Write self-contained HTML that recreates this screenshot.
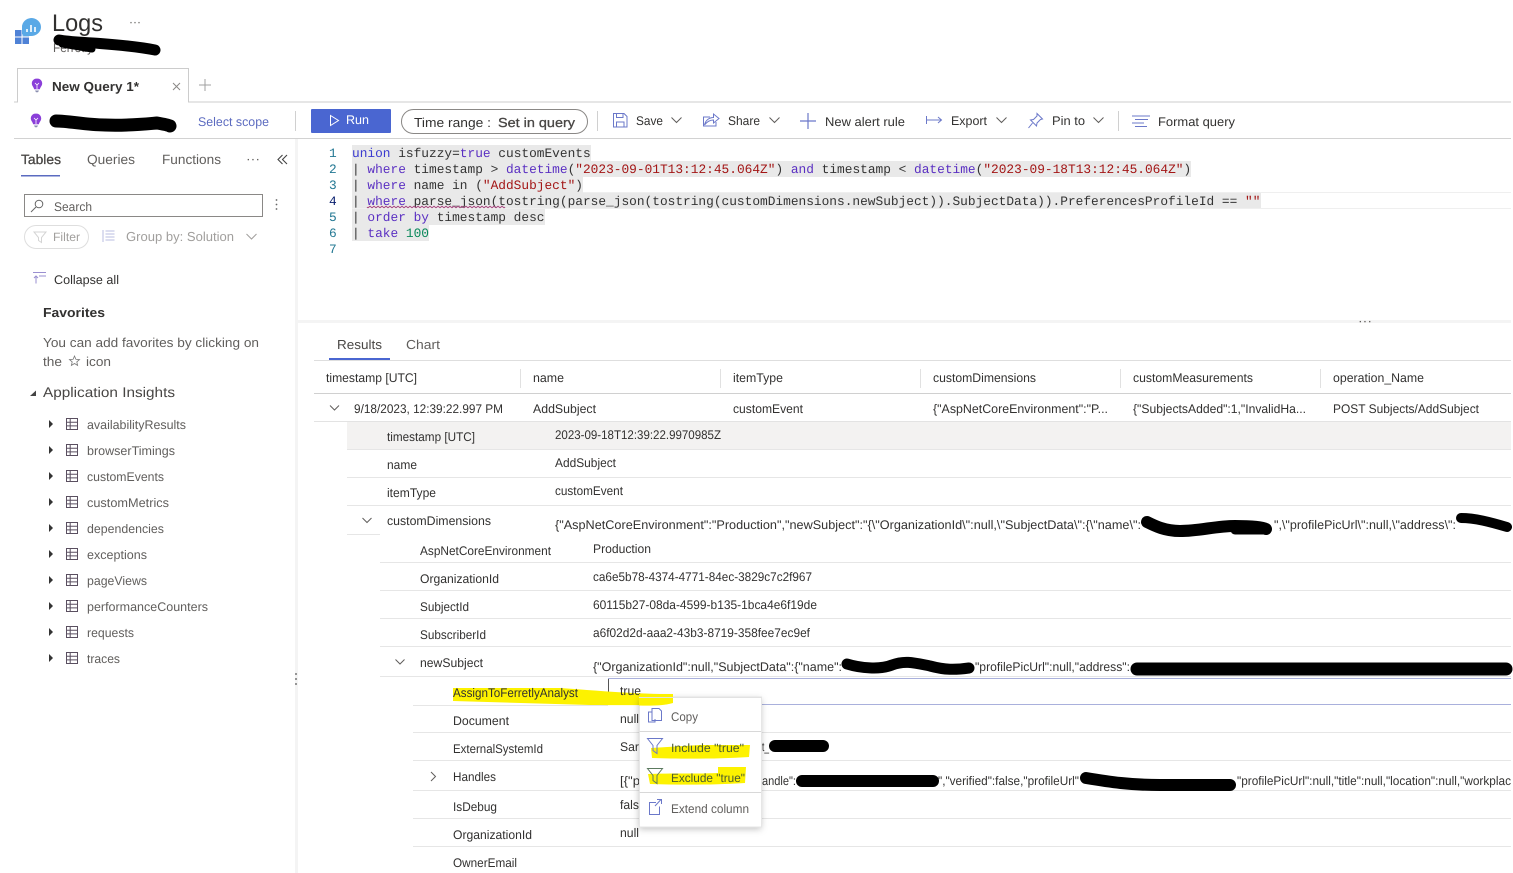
<!DOCTYPE html>
<html lang="en"><head><meta charset="utf-8"><title>Logs</title>
<style>
html,body{margin:0;padding:0;background:#fff;width:1513px;height:873px;overflow:hidden}
svg{display:block;position:absolute;left:0;top:0}
text{font-family:"Liberation Sans",sans-serif;font-size:12.5px;fill:#323130;text-rendering:geometricPrecision;white-space:pre}
.g{fill:#605e5c}.l{fill:#a19f9d}.b{font-weight:bold}
.sb{stroke:#484644;stroke-width:.3px;fill:#484644}
.c{font-family:"Liberation Mono",monospace;font-size:12.83px;fill:#333}
.k{fill:#5a2fc2}.s{fill:#a31515}.n{fill:#09885a}
.hl{fill:#e9e9e9}.ln{stroke:#e6e6e6;stroke-width:1;fill:none}
.ic{stroke:#6b78c9;stroke-width:1;fill:none}
.ch{stroke:#605e5c;stroke-width:1;fill:none}
.r{stroke:#000;fill:none;stroke-linecap:round;stroke-linejoin:round}
.y{fill:#fdf200}
</style></head><body>
<svg width="1513" height="873" viewBox="0 0 1513 873" xmlns="http://www.w3.org/2000/svg">
<!-- logo -->
<g fill="#4f82d6"><rect x="15" y="30" width="6.5" height="6.5"/><rect x="15" y="37.5" width="6.5" height="6.5"/><rect x="22.5" y="37.5" width="6.5" height="6.5"/><rect x="22.5" y="30" width="6.5" height="6.5" fill="#7fb2ea"/></g>
<path d="M31 18a10 9 0 1 1 0 18h-7l-2-2v-7a10 9 0 0 1 9-9z" fill="#5aa9e6"/>
<path d="M27 32v-3M31 32v-7M35 32v-5" stroke="#fff" stroke-width="1.6"/>
<text x="52" y="31" font-size="24" style="font-size:24px" textLength="51" lengthAdjust="spacingAndGlyphs">Logs</text>
<text x="129" y="26" class="g" textLength="12" lengthAdjust="spacingAndGlyphs">···</text>
<text x="53" y="52" class="g" textLength="40" lengthAdjust="spacingAndGlyphs">Ferretly</text>
<path class="r" stroke-width="11" d="M59 40C70 42 82 42 100 43.500C120 45 140 47 155 50"/>
<path class="r" stroke-width="7" d="M62 44L92 49"/>
<!-- tab -->
<path d="M14 102H17.5V68.5H188.5V102H1511" fill="none" stroke="#ccc"/>
<path d="M18 102H188" stroke="#fff" stroke-width="1.5"/>
<path d="M37 78.5c-3.2 0-5.2 2.3-5.2 4.9 0 2.5 1.9 3.6 2.3 5.8h5.8c.4-2.2 2.3-3.3 2.3-5.8 0-2.6-2-4.9-5.2-4.9z" fill="#8b3fd9"/><path d="M35 90.5h4l-1 1.8h-2z" fill="#8b8fb0"/><path d="M35 83l2 2 2-2M37 85v4" stroke="#fff" fill="none" stroke-width=".8"/>
<text x="52" y="91" class="b" style="font-size:13px" textLength="87" lengthAdjust="spacingAndGlyphs">New Query 1*</text>
<path d="M173 83l7 7M180 83l-7 7" stroke="#8a8886" fill="none"/>
<path d="M205 79v12M199 85h12" stroke="#a0a0a0" fill="none"/>
<!-- scope row -->
<path d="M36 113.5c-3.2 0-5.2 2.3-5.2 4.9 0 2.5 1.9 3.6 2.3 5.8h5.8c.4-2.2 2.3-3.3 2.3-5.8 0-2.6-2-4.9-5.2-4.9z" fill="#8b3fd9"/><path d="M34 125.5h4l-1 1.8h-2z" fill="#8b8fb0"/><path d="M34 118l2 2 2-2M36 120v4" stroke="#fff" fill="none" stroke-width=".8"/>
<path class="r" stroke-width="13" d="M56 121C70 121 85 125 105 125C125 126 145 124 157 123C163 124 168 125 170 126"/>
<text x="198" y="126" style="fill:#5c6bc0" textLength="71" lengthAdjust="spacingAndGlyphs">Select scope</text>
<path d="M295.500 111V131M597.500 111V131M1118.500 111V131" stroke="#d0d0d0"/>
<rect x="311" y="109" width="80" height="24" rx="1" fill="#4a66d1"/>
<path d="M330.500 115.500l8 5-8 5z" fill="none" stroke="#fff"/>
<text x="346" y="124" style="fill:#fff" textLength="23" lengthAdjust="spacingAndGlyphs">Run</text>
<rect x="401.500" y="109.500" width="186" height="24" rx="12" fill="#fff" stroke="#8a8886"/>
<text x="414" y="127" style="font-size:13px" textLength="77" lengthAdjust="spacingAndGlyphs">Time range :</text>
<text x="498" y="127" class="sb" style="font-size:13px" textLength="77" lengthAdjust="spacingAndGlyphs">Set in query</text>
<!-- toolbar icons -->
<g class="ic"><path d="M613.500 113.500h10.500l3 3v10.500h-13.500zM616.500 113.500v4h6.500v-4M616.500 127v-5h7.500v5"/></g>
<text x="636" y="125" textLength="27" lengthAdjust="spacingAndGlyphs">Save</text>
<path class="ch" d="M671.500 117.500l5 5 5-5M769.500 117.500l5 5 5-5M996.500 117.500l5 5 5-5M1093.500 117.500l5 5 5-5"/>
<g class="ic"><path d="M710 117h-6.500v9h12.500v-4"/><path d="M704.500 125c1-5 5-7.500 9-7.500v-3.500l5.500 4.500-5.500 4.500v-3c-3 0-6 1-9 5z"/></g>
<text x="728" y="125" textLength="32" lengthAdjust="spacingAndGlyphs">Share</text>
<path class="ic" d="M808 113v16M800 121h16" style="stroke-width:1.2"/>
<text x="825" y="126" textLength="80" lengthAdjust="spacingAndGlyphs">New alert rule</text>
<path class="ic" d="M926.500 116v8M927 120h14M938 117l3.500 3-3.500 3"/>
<text x="951" y="125" textLength="36" lengthAdjust="spacingAndGlyphs">Export</text>
<path class="ic" d="M1037 113.500l5.500 5.500-2 .5-3.500 3.500-.5 3-6-6 3-.5 3.500-3.500zM1032.500 123l-4 5"/>
<text x="1052" y="125" textLength="33" lengthAdjust="spacingAndGlyphs">Pin to</text>
<path class="ic" d="M1132 116h18M1135 119.500h13M1132 123h12M1135 126.500h12"/>
<text x="1158" y="126" textLength="77" lengthAdjust="spacingAndGlyphs">Format query</text>
<path d="M14 138.500H1511" stroke="#d2d2d2"/>
<!-- splitters -->
<rect x="295" y="139" width="3" height="734" fill="#f4f4f4"/>
<rect x="298" y="320" width="1213" height="3" fill="#f4f4f4"/>
<text x="1358" y="325" class="g" textLength="14" lengthAdjust="spacingAndGlyphs">···</text>
<g fill="#777"><circle cx="296" cy="674" r="1"/><circle cx="296" cy="679" r="1"/><circle cx="296" cy="684" r="1"/></g>
<!-- left tabs -->
<text x="21" y="164" class="sb" style="font-size:13.500px" textLength="40" lengthAdjust="spacingAndGlyphs">Tables</text>
<rect x="21" y="175" width="39" height="1.500" fill="#5b6bc0"/>
<text x="87" y="164" style="font-size:13.500px" class="g" textLength="48" lengthAdjust="spacingAndGlyphs">Queries</text>
<text x="162" y="164" style="font-size:13.500px" class="g" textLength="59" lengthAdjust="spacingAndGlyphs">Functions</text>
<text x="246" y="163" class="g" textLength="14" lengthAdjust="spacingAndGlyphs">···</text>
<path d="M282.500 155l-4.500 4.500 4.500 4.500M287 155l-4.500 4.500 4.500 4.500" fill="none" stroke="#444" stroke-width="1.100"/>
<!-- search -->
<rect x="24.500" y="194.500" width="238" height="22" fill="#fff" stroke="#8a8886"/>
<circle cx="39" cy="204" r="3.800" fill="none" stroke="#666"/><path d="M36 207l-5 5" stroke="#666"/>
<text x="54" y="211" class="g" textLength="38" lengthAdjust="spacingAndGlyphs">Search</text>
<g fill="#666"><circle cx="276.500" cy="200" r=".9"/><circle cx="276.500" cy="204.500" r=".9"/><circle cx="276.500" cy="209" r=".9"/></g>
<rect x="24.500" y="225.500" width="64" height="23" rx="11.500" fill="#fff" stroke="#dedede"/>
<path d="M34 232h12l-4.500 5.500v5l-3-2v-3z" fill="none" stroke="#d4d4d4"/>
<text x="53" y="241" class="l" style="font-size:12px" textLength="27" lengthAdjust="spacingAndGlyphs">Filter</text>
<path d="M103 230v12M105.500 231h9M105.500 234h9M105.500 237h9M105.500 240h9" stroke="#b8bde0" fill="none"/>
<text x="126" y="241" class="l" style="font-size:13px" textLength="108" lengthAdjust="spacingAndGlyphs">Group by: Solution</text>
<path d="M246.500 234l5 5 5-5" fill="none" stroke="#a19f9d"/>
<!-- collapse -->
<path d="M33 272.500h13M36 276v7.500M34 278l2-2 2 2M39 276h7" fill="none" stroke="#9a8fd0"/>
<text x="54" y="284" textLength="65" lengthAdjust="spacingAndGlyphs">Collapse all</text>
<text x="43" y="317" class="b" style="font-size:13px" textLength="62" lengthAdjust="spacingAndGlyphs">Favorites</text>
<text x="43" y="347" class="g" style="font-size:13px" textLength="216" lengthAdjust="spacingAndGlyphs">You can add favorites by clicking on</text>
<text x="43" y="366" class="g" style="font-size:13px" textLength="19" lengthAdjust="spacingAndGlyphs">the</text>
<path d="M74.500 356l1.400 3.300 3.600.3-2.700 2.300.8 3.500-3.100-1.900-3.100 1.900.8-3.500-2.700-2.300 3.600-.3z" fill="none" stroke="#777" stroke-width=".8"/>
<text x="86" y="366" class="g" style="font-size:13px" textLength="25" lengthAdjust="spacingAndGlyphs">icon</text>
<path d="M30 396h6v-5.500z" fill="#444"/>
<text x="43" y="397" style="font-size:14px;fill:#484644" textLength="132" lengthAdjust="spacingAndGlyphs">Application Insights</text>
<!-- table list -->
<defs><g id="ti"><path d="M49 -5l4 4-4 4z" fill="#333"/><path d="M66.500 -6.500h11v11h-11zM66.500 -2.800h11M66.500 .9h11M70.200 -6.500v11" fill="none" stroke="#5a4f60"/></g></defs>
<use href="#ti" y="425"/><use href="#ti" y="451"/><use href="#ti" y="477"/><use href="#ti" y="503"/><use href="#ti" y="529"/><use href="#ti" y="555"/><use href="#ti" y="581"/><use href="#ti" y="607"/><use href="#ti" y="633"/><use href="#ti" y="659"/>
<g class="g">
<text class="g" x="87" y="429" textLength="99" lengthAdjust="spacingAndGlyphs">availabilityResults</text>
<text class="g" x="87" y="455" textLength="88" lengthAdjust="spacingAndGlyphs">browserTimings</text>
<text class="g" x="87" y="481" textLength="77" lengthAdjust="spacingAndGlyphs">customEvents</text>
<text class="g" x="87" y="507" textLength="82" lengthAdjust="spacingAndGlyphs">customMetrics</text>
<text class="g" x="87" y="533" textLength="77" lengthAdjust="spacingAndGlyphs">dependencies</text>
<text class="g" x="87" y="559" textLength="60" lengthAdjust="spacingAndGlyphs">exceptions</text>
<text class="g" x="87" y="585" textLength="60" lengthAdjust="spacingAndGlyphs">pageViews</text>
<text class="g" x="87" y="611" textLength="121" lengthAdjust="spacingAndGlyphs">performanceCounters</text>
<text class="g" x="87" y="637" textLength="47" lengthAdjust="spacingAndGlyphs">requests</text>
<text class="g" x="87" y="663" textLength="33" lengthAdjust="spacingAndGlyphs">traces</text>
</g>
<!-- editor -->
<path d="M352 192.500H1511M352 208.500H1511" stroke="#efefef"/>
<rect class="hl" x="352" y="145" width="239" height="16"/>
<rect class="hl" x="352" y="161" width="839" height="16"/>
<rect class="hl" x="352" y="177" width="231" height="16"/>
<rect class="hl" x="352" y="193" width="909" height="15"/>
<rect class="hl" x="352" y="209" width="193" height="16"/>
<rect class="hl" x="352" y="225" width="77" height="16"/>
<g>
<text class="c" x="329" y="157" style="fill:#237893">1</text>
<text class="c" x="329" y="173" style="fill:#237893">2</text>
<text class="c" x="329" y="189" style="fill:#237893">3</text>
<text class="c" x="329" y="205" style="fill:#0b216f">4</text>
<text class="c" x="329" y="221" style="fill:#237893">5</text>
<text class="c" x="329" y="237" style="fill:#237893">6</text>
<text class="c" x="329" y="253" style="fill:#237893">7</text>
<text class="c" x="352" y="157" xml:space="preserve"><tspan class="k" style="fill:#3b3bd0">union</tspan> isfuzzy=<tspan class="k">true</tspan> customEvents</text>
<text class="c" x="352" y="173" xml:space="preserve">| <tspan class="k">where</tspan> timestamp &gt; <tspan class="k">datetime</tspan>(<tspan class="s">"2023-09-01T13:12:45.064Z"</tspan>) <tspan class="k">and</tspan> timestamp &lt; <tspan class="k">datetime</tspan>(<tspan class="s">"2023-09-18T13:12:45.064Z"</tspan>)</text>
<text class="c" x="352" y="189" xml:space="preserve">| <tspan class="k">where</tspan> name in (<tspan class="s">"AddSubject"</tspan>)</text>
<text class="c" x="352" y="205" xml:space="preserve">| <tspan class="k">where</tspan> parse_json(tostring(parse_json(tostring(customDimensions.newSubject)).SubjectData)).PreferencesProfileId == <tspan class="s">""</tspan></text>
<text class="c" x="352" y="221" xml:space="preserve">| <tspan class="k">order by</tspan> timestamp desc</text>
<text class="c" x="352" y="237" xml:space="preserve">| <tspan class="k">take</tspan> <tspan class="n">100</tspan></text>
</g>
<path d="M367 207q1 1.500 2 0t2 0 2 0 2 0 2 0 2 0 2 0 2 0 2 0 2 0 2 0 2 0 2 0 2 0 2 0 2 0 2 0 2 0 2 0 2 0 2 0 2 0 2 0 2 0 2 0 2 0 2 0 2 0 2 0 2 0 2 0 2 0 2 0 2 0 2 0 2 0 2 0 2 0 2 0 2 0 2 0 2 0 2 0 2 0 2 0 2 0 2 0 2 0 2 0 2 0 2 0 2 0 2 0 2 0 2 0 2 0 2 0 2 0 2 0 2 0 2 0 2 0 2 0 2 0 2 0 2 0 2 0 2 0 2 0" fill="none" stroke="#a8457f" stroke-width="1"/>
<!-- results tabs -->
<text x="337" y="349" style="font-size:13px;fill:#484644" textLength="45" lengthAdjust="spacingAndGlyphs">Results</text>
<text x="406" y="349" class="g" style="font-size:13px" textLength="34" lengthAdjust="spacingAndGlyphs">Chart</text>
<rect x="329" y="358" width="61" height="2" fill="#4a66d1"/>
<path d="M314 360.500H1511" stroke="#dedede"/>
<!-- column headers -->
<text x="326" y="382" textLength="91" lengthAdjust="spacingAndGlyphs">timestamp [UTC]</text>
<text x="533" y="382" textLength="31" lengthAdjust="spacingAndGlyphs">name</text>
<text x="733" y="382" textLength="50" lengthAdjust="spacingAndGlyphs">itemType</text>
<text x="933" y="382" textLength="103" lengthAdjust="spacingAndGlyphs">customDimensions</text>
<text x="1133" y="382" textLength="120" lengthAdjust="spacingAndGlyphs">customMeasurements</text>
<text x="1333" y="382" textLength="91" lengthAdjust="spacingAndGlyphs">operation_Name</text>
<path d="M520.500 369v19M720.500 369v19M920.500 369v19M1120.500 369v19M1320.500 369v19" stroke="#e1e1e1"/>
<path d="M314 393.500H1511" stroke="#d0d0d0"/>
<!-- row -->
<path class="ch" d="M330 405.500l4.500 4.500 4.500-4.500"/>
<text x="354" y="413" textLength="149" lengthAdjust="spacingAndGlyphs">9/18/2023, 12:39:22.997 PM</text>
<text x="533" y="413" textLength="63" lengthAdjust="spacingAndGlyphs">AddSubject</text>
<text x="733" y="413" textLength="70" lengthAdjust="spacingAndGlyphs">customEvent</text>
<text x="933" y="413" textLength="175" lengthAdjust="spacingAndGlyphs">{"AspNetCoreEnvironment":"P...</text>
<text x="1133" y="413" textLength="173" lengthAdjust="spacingAndGlyphs">{"SubjectsAdded":1,"InvalidHa...</text>
<text x="1333" y="413" textLength="146" lengthAdjust="spacingAndGlyphs">POST Subjects/AddSubject</text>
<path d="M314 421.500H1511" stroke="#e3e3e3"/>
<!-- details -->
<rect x="347" y="422" width="1164" height="27" fill="#f3f2f1"/>
<path class="ln" d="M347 449.500H1511M347 477.500H1511M347 505.500H1511M347 534.500H380M380 562.500H1511M380 590.500H1511M380 618.500H1511M380 646.500H1511M380 676.500H1511M413 732.500H1511M413 760.500H1511M413 790.500H1511M413 818.500H1511M413 846.500H1511"/>
<path d="M413 705.500H608" class="ln"/>
<text x="387" y="441" textLength="88" lengthAdjust="spacingAndGlyphs">timestamp [UTC]</text>
<text x="555" y="439" textLength="166" lengthAdjust="spacingAndGlyphs">2023-09-18T12:39:22.9970985Z</text>
<text x="387" y="469" textLength="30" lengthAdjust="spacingAndGlyphs">name</text>
<text x="555" y="467" textLength="61" lengthAdjust="spacingAndGlyphs">AddSubject</text>
<text x="387" y="497" textLength="49" lengthAdjust="spacingAndGlyphs">itemType</text>
<text x="555" y="495" textLength="68" lengthAdjust="spacingAndGlyphs">customEvent</text>
<path class="ch" d="M362.500 518l4.500 4.500 4.500-4.500"/>
<text x="387" y="525" textLength="104" lengthAdjust="spacingAndGlyphs">customDimensions</text>
<text x="555" y="529" textLength="586" lengthAdjust="spacingAndGlyphs">{"AspNetCoreEnvironment":"Production","newSubject":"{\"OrganizationId\":null,\"SubjectData\":{\"name\":</text>
<text x="1274" y="529" textLength="182" lengthAdjust="spacingAndGlyphs">",\"profilePicUrl\":null,\"address\":</text>
<path class="r" stroke-width="12" d="M1147 522C1155 526 1165 531 1180 531C1200 531 1215 526 1235 526C1250 526 1262 527 1266 529"/>
<path class="r" stroke-width="9" d="M1235 530L1267 530"/>
<path class="r" stroke-width="10" d="M1461 518C1475 518 1490 522 1507 527"/>
<text x="420" y="555" textLength="131" lengthAdjust="spacingAndGlyphs">AspNetCoreEnvironment</text>
<text x="593" y="553" textLength="58" lengthAdjust="spacingAndGlyphs">Production</text>
<text x="420" y="583" textLength="79" lengthAdjust="spacingAndGlyphs">OrganizationId</text>
<text x="593" y="581" textLength="219" lengthAdjust="spacingAndGlyphs">ca6e5b78-4374-4771-84ec-3829c7c2f967</text>
<text x="420" y="611" textLength="49" lengthAdjust="spacingAndGlyphs">SubjectId</text>
<text x="593" y="609" textLength="224" lengthAdjust="spacingAndGlyphs">60115b27-08da-4599-b135-1bca4e6f19de</text>
<text x="420" y="639" textLength="66" lengthAdjust="spacingAndGlyphs">SubscriberId</text>
<text x="593" y="637" textLength="217" lengthAdjust="spacingAndGlyphs">a6f02d2d-aaa2-43b3-8719-358fee7ec9ef</text>
<path class="ch" d="M395.500 659.500l4.500 4.500 4.500-4.500"/>
<text x="420" y="667" textLength="63" lengthAdjust="spacingAndGlyphs">newSubject</text>
<text x="593" y="671" textLength="249" lengthAdjust="spacingAndGlyphs">{"OrganizationId":null,"SubjectData":{"name":</text>
<text x="975" y="671" textLength="155" lengthAdjust="spacingAndGlyphs">"profilePicUrl":null,"address":</text>
<path class="r" stroke-width="11" d="M847 664C860 668 880 670 892 665C905 660 915 663 930 666C945 670 955 670 969 668"/>
<path class="r" stroke-width="13" d="M1137 669H1506"/>
<!-- selected cell -->
<path d="M608 678.500H1511M608 704.500H1511" stroke="#a9b0dc" stroke-width="1"/>
<path d="M608.500 679V705" stroke="#555"/>
<path class="y" d="M453 688H560C590 690 620 693 660 694C668 695 673 698 673 703C660 706 620 705 590 705L453 701z"/>
<text x="453" y="697" textLength="125" lengthAdjust="spacingAndGlyphs">AssignToFerretlyAnalyst</text>
<text x="620" y="695" textLength="21" lengthAdjust="spacingAndGlyphs">true</text>
<text x="453" y="725" textLength="56" lengthAdjust="spacingAndGlyphs">Document</text>
<text x="620" y="723" textLength="19" lengthAdjust="spacingAndGlyphs">null</text>
<text x="453" y="753" textLength="90" lengthAdjust="spacingAndGlyphs">ExternalSystemId</text>
<text x="620" y="751" textLength="19" lengthAdjust="spacingAndGlyphs">Sar</text>
<text x="762" y="751" textLength="7" lengthAdjust="spacingAndGlyphs">t_</text>
<path class="r" stroke-width="12" d="M775 746H823"/>
<path class="ch" d="M431 772l4.500 4.500-4.500 4.500"/>
<text x="453" y="781" textLength="43" lengthAdjust="spacingAndGlyphs">Handles</text>
<text x="620" y="785" textLength="20" lengthAdjust="spacingAndGlyphs">[{"p</text>
<text x="762" y="785" textLength="34" lengthAdjust="spacingAndGlyphs">andle":</text>
<path class="r" stroke-width="12" d="M802 781H933"/>
<text x="938" y="785" textLength="141" lengthAdjust="spacingAndGlyphs">","verified":false,"profileUrl"</text>
<path class="r" stroke-width="12" d="M1086 778C1110 782 1130 785 1160 785H1230"/>
<text x="1237" y="785" textLength="274" lengthAdjust="spacingAndGlyphs">"profilePicUrl":null,"title":null,"location":null,"workplac</text>
<text x="453" y="811" textLength="44" lengthAdjust="spacingAndGlyphs">IsDebug</text>
<text x="620" y="809" textLength="19" lengthAdjust="spacingAndGlyphs">fals</text>
<text x="453" y="839" textLength="79" lengthAdjust="spacingAndGlyphs">OrganizationId</text>
<text x="620" y="837" textLength="19" lengthAdjust="spacingAndGlyphs">null</text>
<text x="453" y="867" textLength="64" lengthAdjust="spacingAndGlyphs">OwnerEmail</text>
<!-- context menu -->
<defs><filter id="sh" x="-20%" y="-20%" width="140%" height="140%"><feDropShadow dx="0" dy="2" stdDeviation="3.500" flood-color="#000" flood-opacity=".25"/></filter></defs>
<rect x="639" y="697" width="122" height="130" fill="#fff" filter="url(#sh)"/>
<rect x="639.500" y="697" width="122" height="130" fill="none" stroke="#e6e6e6"/>
<path class="y" d="M639 694H673V703C665 705.500 650 706 639 705.500z"/>
<path d="M639 697.500H761.500" stroke="#e2e2e2"/>
<path d="M639.500 731.500H761M639.500 792.500H761" stroke="#d8d8d8"/>
<path class="ic" d="M652 712h-3.500v10h6.500v-3M652 708.500h7l2.500 2.500v9.500h-9.500z"/>
<text x="671" y="721" class="g" textLength="27" lengthAdjust="spacingAndGlyphs">Copy</text>
<path class="y" d="M651 748L700 745H750L749 757C720 759 680 759 652 758z"/>
<path d="M647.500 738.500h15l-5.500 7v8l-4-3v-5z" fill="none" stroke="#6b78c9"/>
<text x="671" y="752" style="font-size:12px;fill:#4a5a30" textLength="73" lengthAdjust="spacingAndGlyphs">Include "true"</text>
<path class="y" d="M648 774C670 773 700 774 718 773V767H746L745 783C715 785 680 785 650 784z"/>
<path d="M647.500 768.500h15l-5.500 7v8l-4-3v-5z" fill="none" stroke="#5c7a60"/>
<text x="671" y="782" style="font-size:12px;fill:#4a5a30" textLength="74" lengthAdjust="spacingAndGlyphs">Exclude "true"</text>
<path class="ic" d="M656 802.500h-6.500v12h10v-8M655 806l6-6.500M657 799.500h4.500v4.500"/>
<text x="671" y="813" class="g" textLength="78" lengthAdjust="spacingAndGlyphs">Extend column</text>
</svg>
</body></html>
